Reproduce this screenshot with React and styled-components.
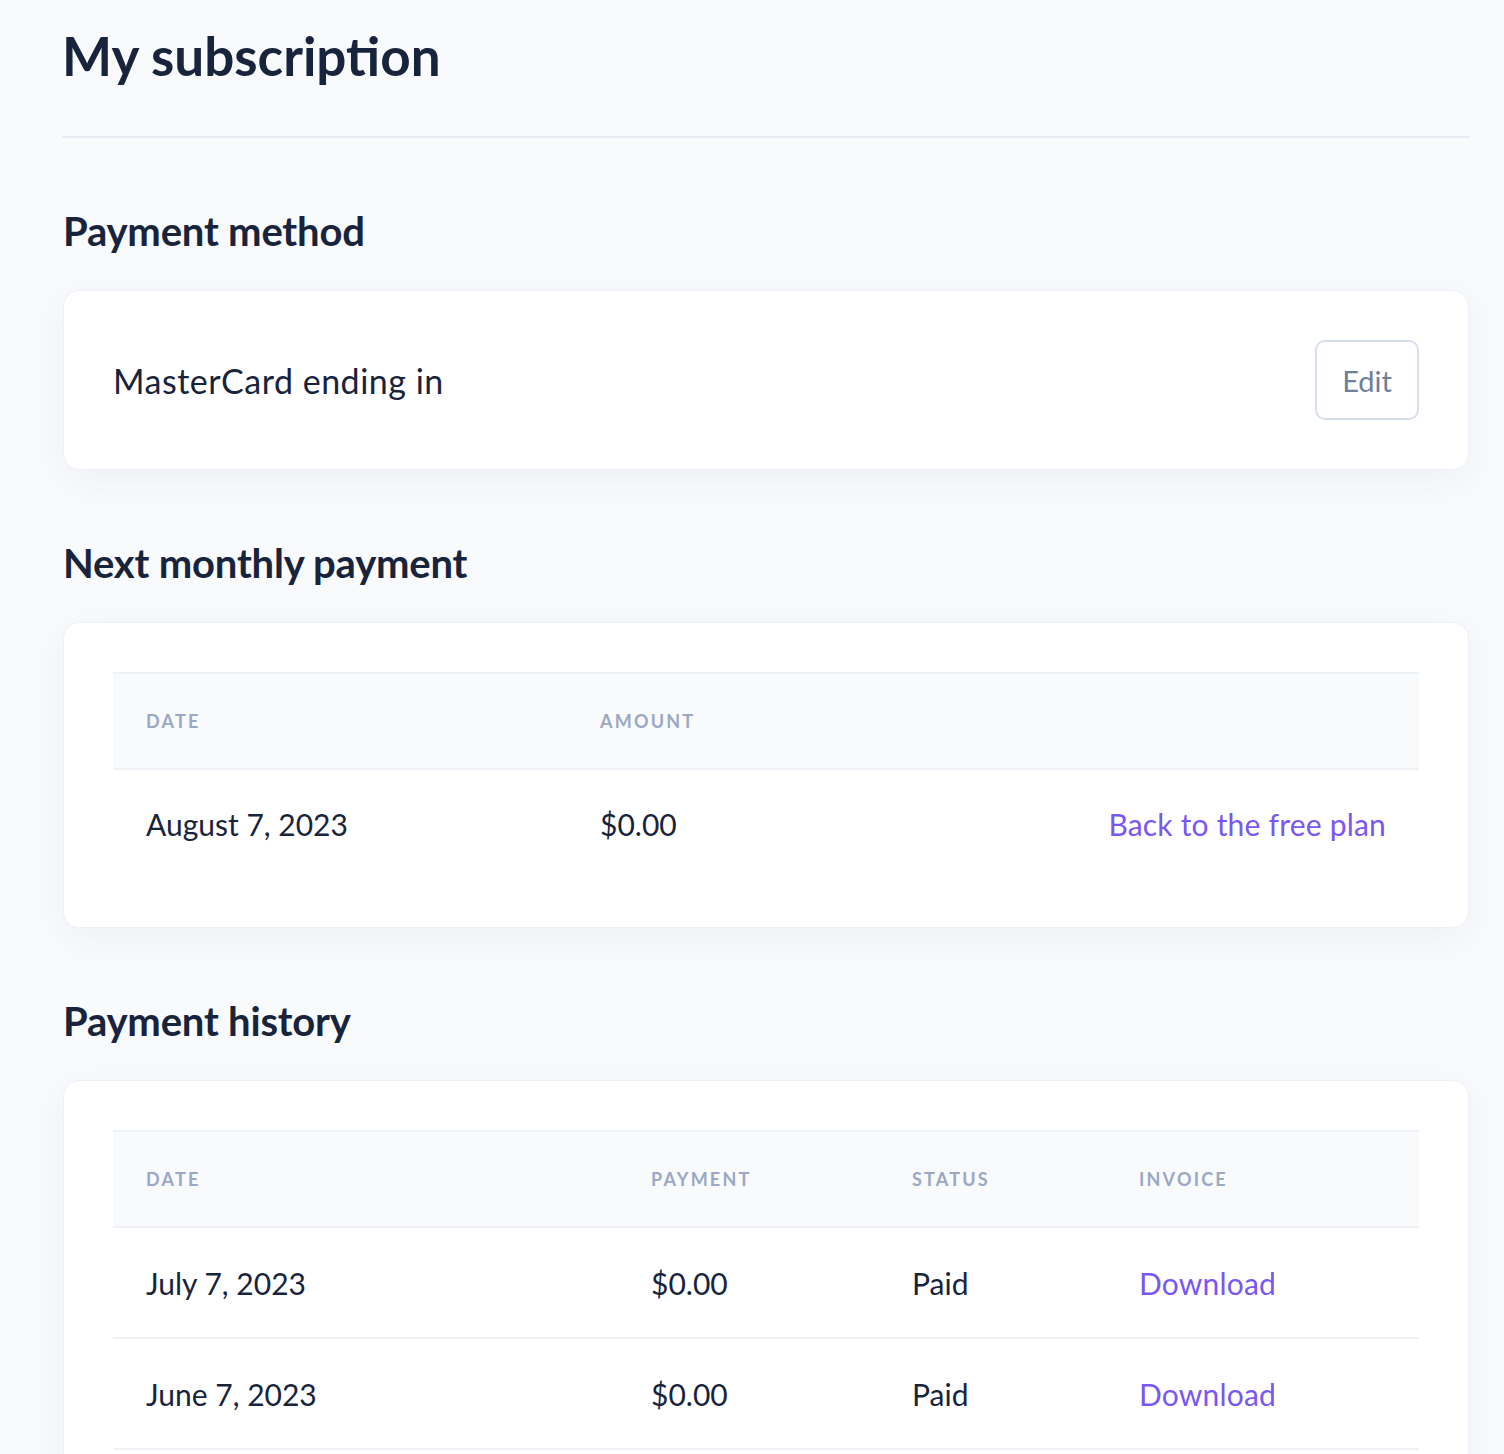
import React from "react";
import styled, { createGlobalStyle } from "styled-components";

const GlobalStyle = createGlobalStyle`
  html, body {
    margin: 0;
    padding: 0;
    background: #f9fafc;
  }
  body {
    font-family: "Lato", "Noto Sans", sans-serif;
    color: #18243c;
  }
`;

const Page = styled.div`
  padding: 24px 35px 0 63px;
`;

const Title = styled.h1`
  margin: 0 0 0 -1px;
  font-size: 53px;
  font-weight: 700;
  line-height: 64px;
  letter-spacing: 0;
  padding-bottom: 48px;
  border-bottom: 2px solid #e7ecf4;
`;

const SectionTitle = styled.h2`
  margin: 0;
  font-size: 40px;
  font-weight: 700;
  line-height: 50px;
  letter-spacing: -0.2px;
  padding: 68px 0 34px;
`;

const Card = styled.div`
  background: #fff;
  border: 1px solid #edf0f6;
  border-radius: 16px;
  box-shadow: 0 10px 40px rgba(40, 60, 110, 0.05);
  padding: 49px;
`;

const MethodRow = styled.div`
  display: flex;
  align-items: center;
  justify-content: space-between;
`;

const BodyText = styled.span`
  font-size: 34px;
  letter-spacing: 0.5px;
  color: #18243c;
`;

const EditButton = styled.button`
  width: 104px;
  height: 80px;
  border: 2px solid #d6dfec;
  border-radius: 10px;
  background: #fff;
  color: #6f7f99;
  font-family: inherit;
  font-size: 29px;
  cursor: pointer;
`;

const Table = styled.div`
  display: grid;
  grid-template-columns: ${(p) => p.cols};
`;

const HeadCell = styled.div`
  background: #f9fafc;
  border-top: 2px solid #eef1f6;
  border-bottom: 2px solid #eef1f6;
  height: 94px;
  display: flex;
  align-items: center;
  padding: 0 33px;
  font-size: 18px;
  font-weight: 700;
  letter-spacing: 2.2px;
  text-transform: uppercase;
  color: #9aa8c4;
`;

const Cell = styled.div`
  height: ${(p) => p.h || 109}px;
  display: flex;
  align-items: center;
  justify-content: ${(p) => (p.right ? "flex-end" : "flex-start")};
  padding: 0 33px;
  font-size: 30px;
  color: #18243c;
  border-bottom: ${(p) => (p.line ? "2px solid #eef1f6" : "none")};
`;

const Link = styled.a`
  color: #7857f4;
  text-decoration: none;
  font-size: 30px;
  letter-spacing: 0.2px;
  cursor: pointer;
`;

const history = [
  { date: "July 7, 2023", payment: "$0.00", status: "Paid" },
  { date: "June 7, 2023", payment: "$0.00", status: "Paid" },
];

export default function App() {
  return (
    <>
      <GlobalStyle />
      <Page>
        <Title>My subscription</Title>

        <SectionTitle>Payment method</SectionTitle>
        <Card>
          <MethodRow>
            <BodyText>MasterCard ending in</BodyText>
            <EditButton>Edit</EditButton>
          </MethodRow>
        </Card>

        <SectionTitle>Next monthly payment</SectionTitle>
        <Card>
          <Table cols="454px 1fr 1fr">
            <HeadCell>Date</HeadCell>
            <HeadCell>Amount</HeadCell>
            <HeadCell />
            <Cell h={108}>August 7, 2023</Cell>
            <Cell h={108}>$0.00</Cell>
            <Cell h={108} right>
              <Link>Back to the free plan</Link>
            </Cell>
          </Table>
        </Card>

        <SectionTitle>Payment history</SectionTitle>
        <Card>
          <Table cols="505px 261px 227px 1fr">
            <HeadCell>Date</HeadCell>
            <HeadCell>Payment</HeadCell>
            <HeadCell>Status</HeadCell>
            <HeadCell>Invoice</HeadCell>
            {history.map((row) => (
              <React.Fragment key={row.date}>
                <Cell line>{row.date}</Cell>
                <Cell line>{row.payment}</Cell>
                <Cell line>{row.status}</Cell>
                <Cell line>
                  <Link>Download</Link>
                </Cell>
              </React.Fragment>
            ))}
          </Table>
        </Card>
      </Page>
    </>
  );
}
